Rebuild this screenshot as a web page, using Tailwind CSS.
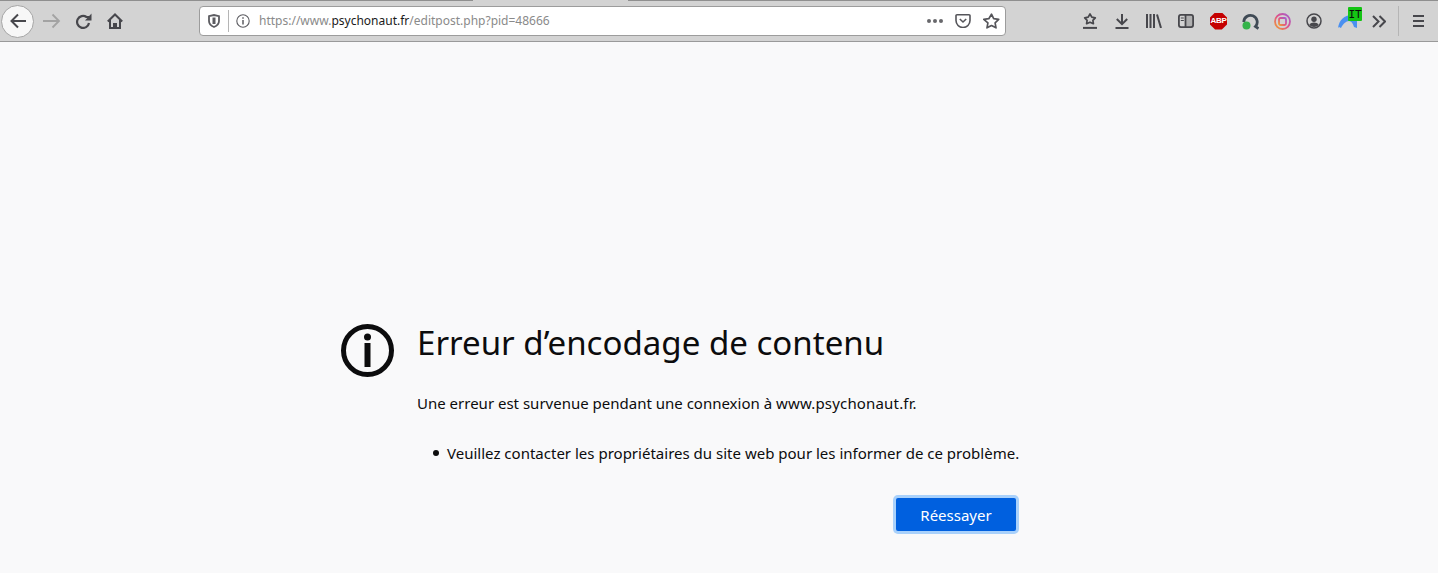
<!DOCTYPE html>
<html lang="fr">

<head>
  <meta charset="UTF-8" />
  <title>Erreur d’encodage de contenu</title>
  <script src="https://cdn.jsdelivr.net/npm/@tailwindcss/browser@4"></script>
</head>

<body class="flex h-[573px] flex-col overflow-hidden bg-[#f9f9fa] font-['Noto_Sans','Open_Sans',sans-serif] text-[#0c0c0d]">
  <!-- barre du navigateur -->
  <header class="relative flex h-[42px] shrink-0 items-center border-y border-t-[#8f8f8f] border-b-[#9a9a9a] bg-[#d3d3d3] text-[#4a4a4f]">
    <div class="absolute left-[473px] top-[-1px] h-[1px] w-[155px] bg-[#d3d3d3]"></div>

    <!-- navigation -->
    <div class="ml-[1px] flex h-[33px] w-[33px] items-center justify-center rounded-full border border-[#a5a5a5] bg-[#f7f7f7]">
      <svg width="18" height="18" viewBox="0 0 18 18" fill="none" stroke="#47474c" stroke-width="2"><path d="M17 9H2M9 2.500 2.500 9 9 15.500" /></svg>
    </div>
    <svg class="ml-[9px]" width="18" height="16" viewBox="0 0 18 16" fill="none" stroke="#a3a3a3" stroke-width="1.800"><path d="M0 8h16M9.500 1.500 16 8l-6.500 6.500" /></svg>
    <svg class="ml-[14px]" width="17" height="16" viewBox="0 0 17 16" fill="none" stroke="#47474c" stroke-width="2.200"><path d="M14 10A6 6 0 1 1 11.500 4H14" /><path d="M16.500 0.500V7.500H10Z" fill="#47474c" stroke="none" /></svg>
    <svg class="ml-[15px]" width="16" height="16" viewBox="0 0 16 16" fill="none" stroke="#47474c" stroke-width="2"><path d="M0.800 8.500 8 1.500l7.200 7M3 6.500V15h10V6.500" /><path d="M6 15v-5h4v5Z" fill="#47474c" stroke="none" /></svg>

    <!-- barre d'adresse -->
    <div class="ml-[76px] flex h-[30px] w-[807px] shrink-0 items-center rounded-[4px] border border-[#9c9c9c] bg-white">
      <svg class="ml-[8px]" width="12" height="14" viewBox="0 0 12 14" fill="none" stroke="#5c5c61" stroke-width="1.800"><path d="M1 2.200 6 1l5 1.200V7c0 3-2.500 5-5 6-2.500-1-5-3-5-6Z" /><path d="M6 3.500V10" stroke-width="3" /></svg>
      <div class="ml-[8px] h-[22px] w-px bg-[#b5b5b5]"></div>
      <svg class="ml-[7px]" width="14" height="14" viewBox="0 0 14 14" fill="none" stroke="#5c5c61" stroke-width="1.100"><circle cx="7" cy="7" r="6.200" /><path d="M7 6v4.500" stroke-width="1.500" /><path d="M7 3.300v1.400" stroke-width="1.500" /></svg>
      <div class="ml-[9px] whitespace-nowrap text-[12px] leading-none text-[#8a8a8a]">https://www.<span class="text-[#1a1a1a]">psychonaut.fr</span>/editpost.php?pid=48666</div>
      <div class="ml-auto flex items-center">
        <div class="flex gap-[2px]">
          <span class="h-[4px] w-[4px] rounded-full bg-[#68686c]"></span>
          <span class="h-[4px] w-[4px] rounded-full bg-[#68686c]"></span>
          <span class="h-[4px] w-[4px] rounded-full bg-[#68686c]"></span>
        </div>
        <svg class="ml-[12px]" width="16" height="14" viewBox="0 0 16 14" fill="none" stroke="#55555a" stroke-width="1.600"><path d="M1 1.800A1 1 0 0 1 2 0.800h12a1 1 0 0 1 1 1V6.500a7 7 0 0 1-14 0Z" /><path d="m4.800 5 3.200 3 3.200-3" /></svg>
        <svg class="ml-[12px] mr-[5px]" width="17" height="16" viewBox="0 0 17 16" fill="none" stroke="#55555a" stroke-width="1.700" stroke-linejoin="round"><path d="m8.500 1.200 2.200 4.500 5 .7-3.600 3.500.9 4.900-4.500-2.300-4.500 2.300.9-4.900L0.800 6.400l5-.7Z" /></svg>
      </div>
    </div>

    <!-- icônes de la barre d'outils -->
    <div class="ml-[76px] flex items-center">
      <svg width="16" height="16" viewBox="0 0 16 16" fill="none" stroke="#47474c" stroke-width="1.700" stroke-linejoin="round"><path d="m8 1 1.800 3.200 3.500.6-2.400 2.500.5 3.400L8 9.200l-3.400 1.500.5-3.400L2.700 4.800l3.500-.6Z" /><path d="M1 14.900h14" stroke-width="2" /></svg>
      <svg class="ml-[16px]" width="16" height="16" viewBox="0 0 16 16" fill="none" stroke="#47474c" stroke-width="2"><path d="M8 1v10M2.800 6 8 11.200 13.200 6M1.500 14.900h13" /></svg>
      <svg class="ml-[16px]" width="16" height="14" viewBox="0 0 16 14" fill="none" stroke="#47474c" stroke-width="2"><path d="M1 0v14M4.500 0v14M8 0v14M11 0.500l4 13.500" /></svg>
      <svg class="ml-[16px]" width="16" height="14" viewBox="0 0 16 14" fill="none" stroke="#47474c" stroke-width="1.800"><rect x="0.900" y="0.900" width="14.200" height="12.200" rx="2" /><path d="M7.500 1v12" /><path d="M2.800 4h3M2.800 6.500h3" stroke-width="1.100" /><path d="M8 1h6a1 1 0 0 1 1 1v10a1 1 0 0 1-1 1H8Z" fill="#47474c" fill-opacity="0.250" stroke="none" /></svg>
      <div class="ml-[16px] flex h-[17px] w-[17px] items-center justify-center bg-[#c50000] [clip-path:polygon(30%_0,70%_0,100%_30%,100%_70%,70%_100%,30%_100%,0_70%,0_30%)]">
        <span class="font-['Liberation_Sans',sans-serif] text-[8px] font-bold leading-none tracking-[-0.3px] text-white">ABP</span>
      </div>
      <svg class="ml-[15px]" width="17" height="17" viewBox="0 0 17 17" fill="none"><path d="M1.800 9A6.700 6.700 0 1 1 13.500 13.500L16.500 15.500" stroke="#3f4a55" stroke-width="2.800" /><circle cx="4.500" cy="12.500" r="4" fill="#34b34a" /></svg>
      <svg class="ml-[15px]" width="17" height="17" viewBox="0 0 17 17" fill="none"><defs><linearGradient id="ig" x1="0" y1="1" x2="1" y2="0"><stop offset="0" stop-color="#f0a030" /><stop offset="0.500" stop-color="#e0508a" /><stop offset="1" stop-color="#a060d0" /></linearGradient></defs><circle cx="8.500" cy="8.500" r="7.500" stroke="url(#ig)" stroke-width="1.800" /><rect x="5" y="5" width="7" height="7" rx="1.500" stroke="url(#ig)" stroke-width="1.800" /></svg>
      <svg class="ml-[15px]" width="16" height="16" viewBox="0 0 16 16" fill="none"><circle cx="8" cy="8" r="7" stroke="#47474c" stroke-width="1.500" /><circle cx="8" cy="6.300" r="2.700" fill="#47474c" /><path d="M3.200 12c1-2 3-2.600 4.800-2.600s3.800.6 4.800 2.600A6.500 6.500 0 0 1 3.200 12Z" fill="#47474c" /></svg>
      <div class="relative ml-[16px] h-[16px] w-[24px]">
        <svg class="absolute left-0 top-[2px]" width="20" height="14" viewBox="0 0 20 14" fill="#4a90f0"><path d="M0 13C1 5 7 0 13 0c3 0 5 1 6 3v10l-3-1c-1-4-3-6-5-6-3 0-6 3-8 7L1 12Z" /></svg>
        <div class="absolute left-[10px] top-[-6px] flex h-[14px] w-[14px] items-center justify-center rounded-[1px] bg-[#14c414] font-['DejaVu_Sans_Mono',monospace] text-[11px] leading-none text-[#0c0c0d]">IT</div>
      </div>
      <svg class="ml-[10px]" width="14" height="13" viewBox="0 0 14 13" fill="none" stroke="#47474c" stroke-width="2"><path d="m1 1 5.500 5.500L1 12M7.500 1 13 6.500 7.500 12" /></svg>
      <div class="ml-[12px] h-[30px] w-px bg-[#b5b5b5]"></div>
      <svg class="ml-[13px]" width="13" height="12" viewBox="0 0 13 12" fill="none" stroke="#47474c" stroke-width="2"><path d="M1 1h11M1 6h11M1 11h11" /></svg>
    </div>
  </header>

  <!-- page d'erreur -->
  <main class="flex min-h-0 flex-1 pl-[341px]">
    <svg class="mt-[282px] shrink-0" width="53" height="53" viewBox="0 0 53 53" fill="none"><circle cx="26.500" cy="26.500" r="24" stroke="#0c0c0d" stroke-width="5" /><circle cx="26.500" cy="13" r="3.500" fill="#0c0c0d" /><path d="M26.500 19v24" stroke="#0c0c0d" stroke-width="6" /></svg>
    <div class="ml-[23px] w-[599px]">
      <h1 class="mt-[278px] whitespace-nowrap text-[33.07px] font-normal leading-[46px]">Erreur d’encodage de contenu</h1>
      <p class="mt-[26px] whitespace-nowrap text-[15px] leading-[22px]">Une erreur est survenue pendant une connexion à <span class="tracking-[0.17px]">www.psychonaut.fr.</span></p>
      <ul class="mt-[28px] whitespace-nowrap pl-[16px] text-[15.03px] leading-[22px]">
        <li class="flex items-center"><span class="mr-[8px] h-[6px] w-[6px] shrink-0 rounded-full bg-[#0c0c0d]"></span>Veuillez contacter les propriétaires du site web pour les informer de ce problème.</li>
      </ul>
      <div class="mt-[34px] flex justify-end">
        <button class="h-[33px] w-[120px] rounded-[2px] bg-[#0060df] pt-[2px] text-[15px] leading-none text-white ring-[3px] ring-[#a9d1fb]">Réessayer</button>
      </div>
    </div>
  </main>
</body>

</html>
